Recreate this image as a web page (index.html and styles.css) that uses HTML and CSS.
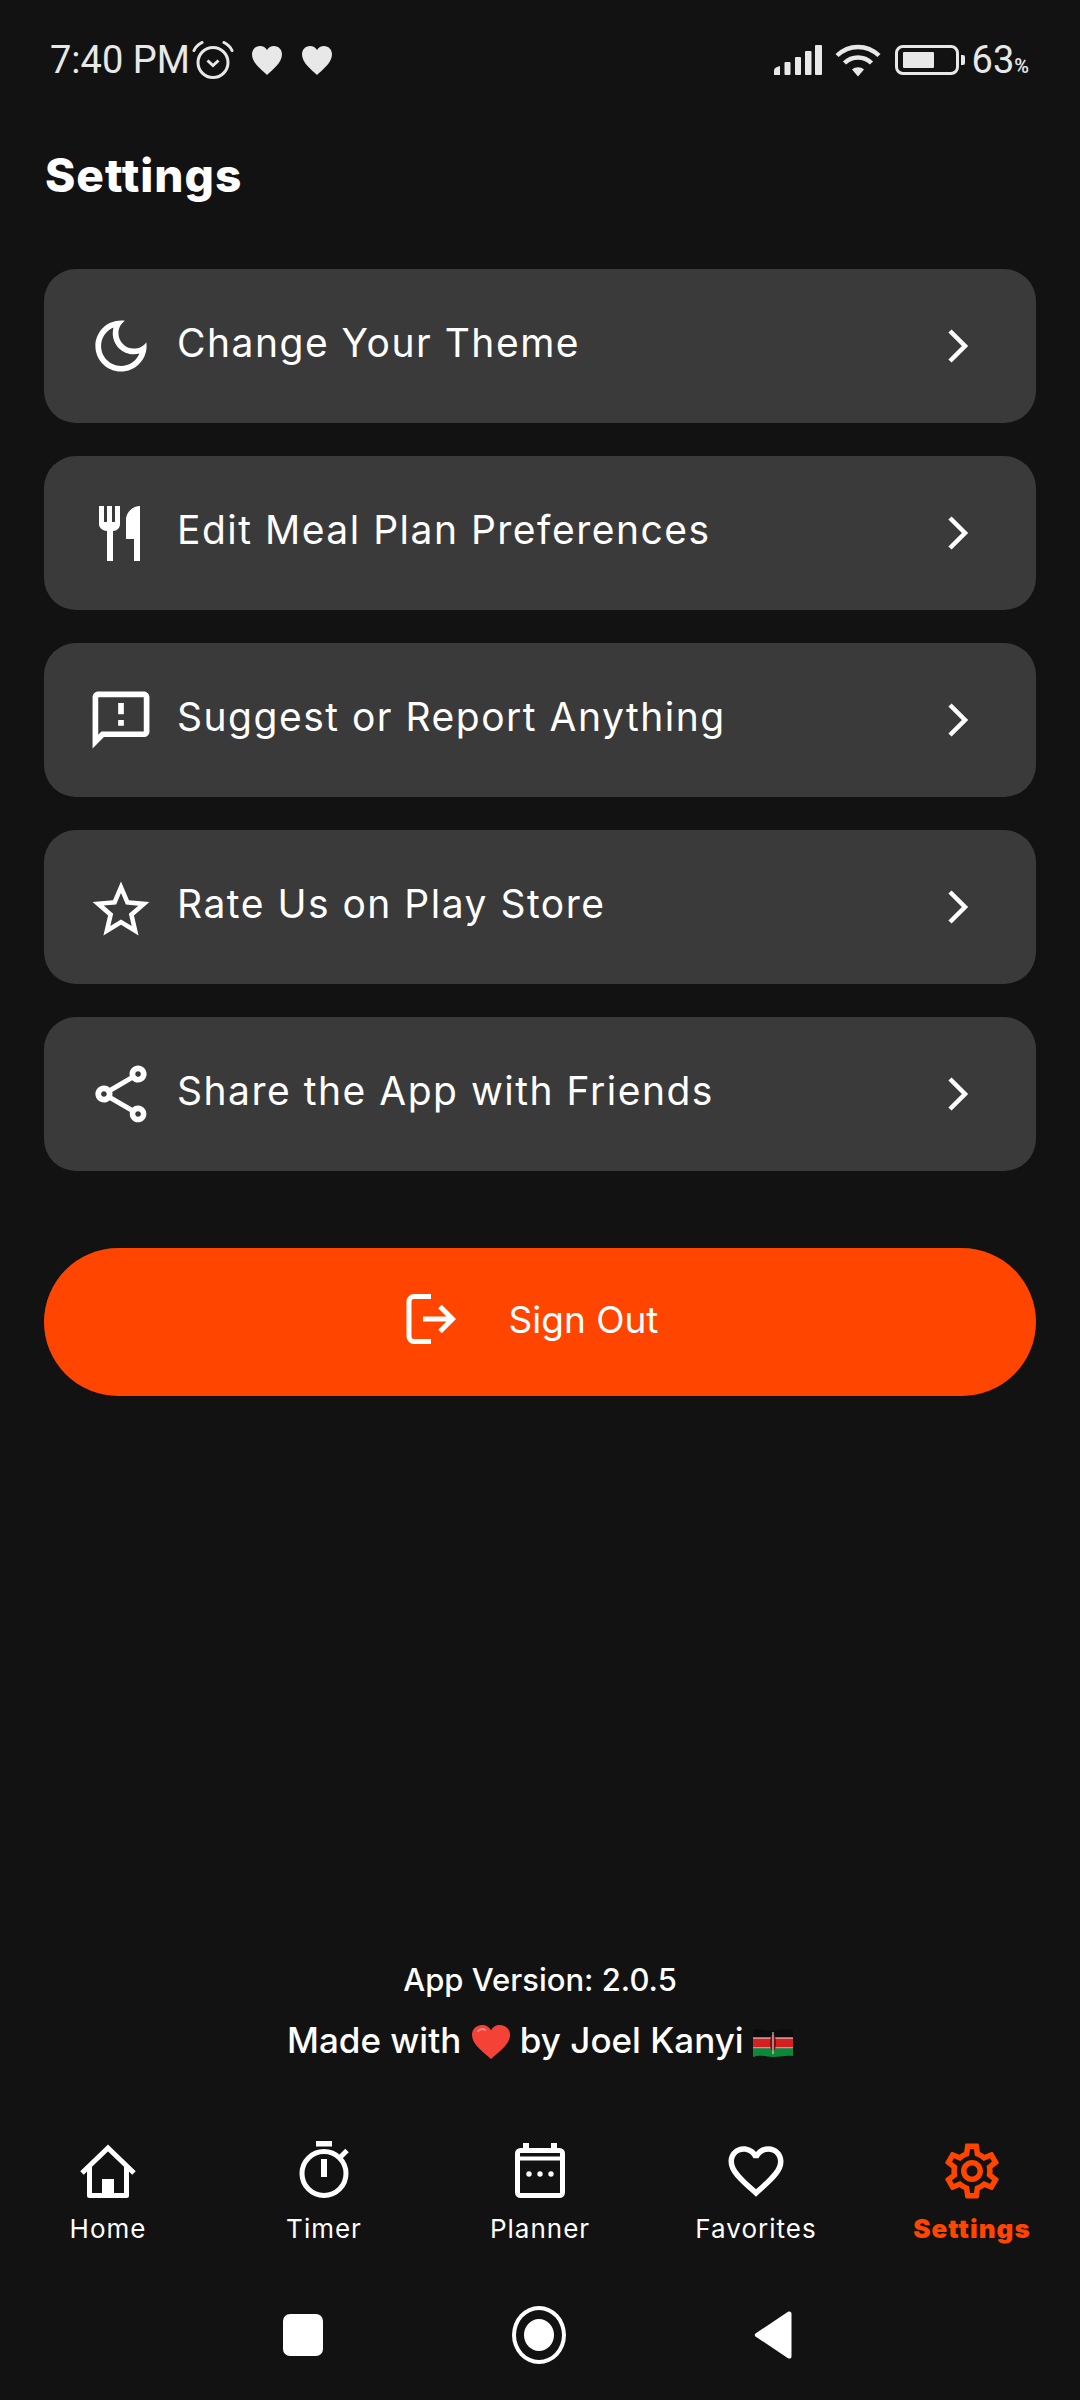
FILE: index.html
```html
<!DOCTYPE html>
<html>
<head>
    <title>Settings</title>
    <link rel="stylesheet" href="styles.css">
</head>
<body>
    <div class="status-bar">
        <span class="time">7:40 PM</span>
        <svg class="alarm-icon" viewBox="0 0 42 38"><circle cx="21" cy="21.5" r="15" fill="none" stroke="#e8e8e8" stroke-width="3"/><path d="M15.5 19.5l5.5 5 5.500-5" fill="none" stroke="#e8e8e8" stroke-width="3"/><path d="M2 9.500C3.500 6 6 3.500 10 1.500M32 1.500c4 2 6.500 4.500 8 8" fill="none" stroke="#e8e8e8" stroke-width="3" stroke-linecap="round"/></svg>
        <svg class="status-heart" viewBox="0 0 32 30"><path d="M16 30C11 25 1 18 1 9.500 1 4.500 4.500 1 9 1c3 0 5.500 1.500 7 4 1.500-2.500 4-4 7-4 4.500 0 8 3.500 8 8.500C31 18 21 25 16 30z" fill="#e8e8e8"/></svg>
        <svg class="status-heart" viewBox="0 0 32 30"><path d="M16 30C11 25 1 18 1 9.500 1 4.500 4.500 1 9 1c3 0 5.500 1.500 7 4 1.500-2.500 4-4 7-4 4.500 0 8 3.500 8 8.500C31 18 21 25 16 30z" fill="#e8e8e8"/></svg>
        <div class="status-right">
            <svg class="signal-icon" viewBox="0 0 48 30" fill="#e8e8e8"><path d="M0 30v-4q0-3 3-4l3-1v9z"/><rect x="10.500" y="17" width="6" height="13" rx="1"/><rect x="21" y="12" width="6" height="18" rx="1"/><rect x="31" y="6" width="6.500" height="24" rx="1"/><rect x="41" y="0" width="7" height="30" rx="1"/></svg>
            <svg class="wifi-icon" viewBox="0 0 46 34" fill="none" stroke="#e8e8e8" stroke-width="4.500"><path d="M2 12.500C14 1 32 1 44 12.500"/><path d="M9.500 20C17 12.500 29 12.500 36.500 20"/><path d="M17 26.500l6 7 6-7c-3.500-3-8.500-3-12 0z" fill="#e8e8e8" stroke="none"/></svg>
            <div class="battery">
                <div class="battery-body"><div class="battery-fill"></div></div>
                <div class="battery-tip"></div>
            </div>
            <span class="battery-text">63<small>%</small></span>
        </div>
    </div>

    <h1 class="page-title">Settings</h1>

    <ul class="settings-list">
        <li class="settings-item">
            <svg class="item-icon" viewBox="0.4 0.4 23.200 23.200"><path d="M9.370 5.510C9.190 6.150 9.100 6.820 9.100 7.500c0 4.080 3.320 7.400 7.400 7.400.68 0 1.350-.09 1.990-.27C17.450 17.190 14.930 19 12 19c-3.860 0-7-3.140-7-7C5 9.070 6.810 6.550 9.370 5.510zM12 3c-4.970 0-9 4.030-9 9s4.030 9 9 9 9-4.030 9-9c0-.46-.04-.92-.1-1.360-.98 1.370-2.580 2.260-4.400 2.260-2.980 0-5.400-2.420-5.400-5.400 0-1.810.89-3.420 2.260-4.400C12.920 3.040 12.460 3 12 3z"/></svg>
            <span class="item-label">Change Your Theme</span>
            <svg class="chevron" viewBox="0 0 24 36"><path d="M4 3l15 15L4 33"/></svg>
        </li>
        <li class="settings-item">
            <svg class="item-icon" viewBox="0 0 66 66"><path d="M11 6h5v16h3V6h5v16h3V6h5v18c0 4-3 7-7 7v30h-6V31c-4 0-8-3-8-7z"/><path d="M52 6v55h-6V39h-8V20c0-8 7-14 14-14z"/></svg>
            <span class="item-label">Edit Meal Plan Preferences</span>
            <svg class="chevron" viewBox="0 0 24 36"><path d="M4 3l15 15L4 33"/></svg>
        </li>
        <li class="settings-item">
            <svg class="item-icon" viewBox="0.4 0.4 23.200 23.200"><path d="M20 2H4c-1.100 0-1.990.9-1.990 2L2 22l4-4h14c1.100 0 2-.9 2-2V4c0-1.100-.9-2-2-2zm0 14H5.170l-.59.59-.58.58V4h16v12zM11 12h2v2h-2zm0-6h2v4h-2z"/></svg>
            <span class="item-label">Suggest or Report Anything</span>
            <svg class="chevron" viewBox="0 0 24 36"><path d="M4 3l15 15L4 33"/></svg>
        </li>
        <li class="settings-item">
            <svg class="item-icon" viewBox="0.4 -0.6 23.200 23.200"><path d="M22 9.240l-7.190-.62L12 2 9.190 8.630 2 9.240l5.460 4.730L5.820 21 12 17.270 18.180 21l-1.630-7.030L22 9.240zM12 15.400l-3.760 2.270 1-4.280-3.320-2.880 4.380-.38L12 6.100l1.710 4.040 4.380.38-3.320 2.880 1 4.280L12 15.400z"/></svg>
            <span class="item-label">Rate Us on Play Store</span>
            <svg class="chevron" viewBox="0 0 24 36"><path d="M4 3l15 15L4 33"/></svg>
        </li>
        <li class="settings-item">
            <svg class="item-icon" viewBox="0.4 0.4 23.200 23.200"><path d="M18 16.080c-.76 0-1.440.3-1.960.77L8.910 12.700c.05-.23.09-.46.09-.7s-.04-.47-.09-.7l7.050-4.110c.54.5 1.250.81 2.040.81 1.660 0 3-1.340 3-3s-1.340-3-3-3-3 1.340-3 3c0 .24.04.47.09.7L8.040 9.810C7.500 9.310 6.790 9 6 9c-1.660 0-3 1.340-3 3s1.340 3 3 3c.79 0 1.500-.31 2.040-.81l7.120 4.160c-.05.21-.08.43-.08.65 0 1.610 1.310 2.920 2.920 2.920s2.920-1.310 2.920-2.920-1.310-2.920-2.920-2.920zM18 4c.55 0 1 .45 1 1s-.45 1-1 1-1-.45-1-1 .45-1 1-1zM6 13c-.55 0-1-.45-1-1s.45-1 1-1 1 .45 1 1-.45 1-1 1zm12 7.020c-.55 0-1-.45-1-1s.45-1 1-1 1 .45 1 1-.45 1-1 1z"/></svg>
            <span class="item-label">Share the App with Friends</span>
            <svg class="chevron" viewBox="0 0 24 36"><path d="M4 3l15 15L4 33"/></svg>
        </li>
    </ul>

    <button class="sign-out" type="button">
        <svg class="sign-out-icon" viewBox="0 0 50 50" fill="none" stroke="#fff" stroke-width="5"><path d="M25 2.500H8a5 5 0 0 0-5 5v35a5 5 0 0 0 5 5h17"/><path d="M17 25h29M34 12.500L46.500 25 34 37.500"/></svg>
        <span>Sign Out</span>
    </button>

    <footer class="app-info">
        <p class="version">App Version: 2.0.5</p>
        <p class="credit">Made with
            <svg class="emoji-heart" viewBox="0 0 38 34"><path d="M19 34C13 28 0 20 0 10 0 4 4.500 0 10 0c4 0 7.500 2 9 5.500C20.500 2 24 0 28 0c5.500 0 10 4 10 10 0 10-13 18-19 24z" fill="#f44336"/><path d="M6 6c2-2 5-2.500 7-1" fill="none" stroke="#f88" stroke-width="2" stroke-linecap="round"/></svg>
            by Joel Kanyi
            <svg class="flag" viewBox="0 0 40 30"><path d="M0 2c8-3 14 2 20 1s13-3 20-1v8H0z" fill="#0c0c0c"/><path d="M0 10h40v10H0z" fill="#d32020"/><path d="M0 10h40M0 20h40" stroke="#eee" stroke-width="1.200"/><path d="M0 20.500h40V28c-7-1-14 1-20 1S8 26 0 29z" fill="#0a8a38"/><ellipse cx="20" cy="15" rx="3" ry="8.500" fill="#7a1010"/><path d="M20 4v22" stroke="#eee" stroke-width="1"/></svg>
        </p>
    </footer>

    <nav class="bottom-nav">
        <a class="nav-item">
            <svg class="nav-icon" viewBox="0 0 66 66"><path d="M7 35L33 10l26 25" fill="none" stroke="#fff" stroke-width="5"/><path d="M14.500 29v28.500h37V29" fill="none" stroke="#fff" stroke-width="5" stroke-linejoin="round"/><rect x="27" y="41" width="12" height="15" fill="#fff"/></svg>
            <span>Home</span>
        </a>
        <a class="nav-item">
            <svg class="nav-icon" viewBox="0 0 66 66"><circle cx="33" cy="35.500" r="22" fill="none" stroke="#fff" stroke-width="5"/><rect x="25" y="3" width="16" height="5.500" fill="#fff"/><rect x="30" y="21" width="6" height="18" fill="#fff"/><path d="M49 19.500l7-7" stroke="#fff" stroke-width="5"/></svg>
            <span>Timer</span>
        </a>
        <a class="nav-item">
            <svg class="nav-icon" viewBox="0 0 66 66"><rect x="10.500" y="12.500" width="45" height="45" rx="3" fill="none" stroke="#fff" stroke-width="5"/><path d="M10 20.500h46" stroke="#fff" stroke-width="4"/><rect x="16" y="5" width="6" height="8" fill="#fff"/><rect x="44" y="5" width="6" height="8" fill="#fff"/><circle cx="22" cy="36" r="2.700" fill="#fff"/><circle cx="33" cy="36" r="2.700" fill="#fff"/><circle cx="44" cy="36" r="2.700" fill="#fff"/></svg>
            <span>Planner</span>
        </a>
        <a class="nav-item">
            <svg class="nav-icon" viewBox="0 0 24 24"><path fill="#fff" d="M16.500 3c-1.740 0-3.410.81-4.500 2.090C10.910 3.810 9.240 3 7.500 3 4.420 3 2 5.420 2 8.500c0 3.780 3.400 6.860 8.550 11.540L12 21.350l1.450-1.320C18.600 15.360 22 12.280 22 8.500 22 5.420 19.580 3 16.500 3zm-4.400 15.550l-.1.1-.1-.1C7.140 14.240 4 11.390 4 8.500 4 6.500 5.500 5 7.500 5c1.540 0 3.040.99 3.570 2.360h1.870C13.460 5.990 14.960 5 16.500 5c2 0 3.500 1.500 3.500 3.500 0 2.890-3.140 5.740-7.900 10.050z"/></svg>
            <span>Favorites</span>
        </a>
        <a class="nav-item active">
            <svg class="nav-icon" viewBox="0 0 24 24"><path fill="#ff4500" d="M19.430 12.980c.04-.32.07-.64.07-.98 0-.34-.03-.66-.07-.98l2.110-1.650c.19-.15.24-.42.12-.64l-2-3.460c-.09-.16-.26-.25-.44-.25-.06 0-.12.01-.17.03l-2.490 1c-.52-.4-1.080-.73-1.690-.98l-.38-2.650C14.460 2.180 14.250 2 14 2h-4c-.25 0-.46.18-.49.42l-.38 2.650c-.61.25-1.170.59-1.690.98l-2.490-1c-.06-.02-.12-.03-.18-.03-.17 0-.34.09-.43.25l-2 3.460c-.13.22-.07.49.12.64l2.110 1.650c-.04.32-.07.65-.07.98 0 .33.03.66.07.98l-2.110 1.650c-.19.15-.24.42-.12.64l2 3.460c.09.16.26.25.44.25.06 0 .12-.01.17-.03l2.490-1c.52.4 1.080.73 1.690.98l.38 2.650c.03.24.24.42.49.42h4c.25 0 .46-.18.49-.42l.38-2.650c.61-.25 1.170-.59 1.690-.98l2.490 1c.06.02.12.03.18.03.17 0 .34-.09.43-.25l2-3.460c.12-.22.07-.49-.12-.64l-2.110-1.650zm-1.980-1.710c.04.31.05.52.05.73 0 .21-.02.43-.05.73l-.14 1.130.89.7 1.080.84-.7 1.210-1.270-.51-1.040-.42-.9.68c-.43.32-.84.56-1.250.73l-1.060.43-.16 1.130-.2 1.350h-1.400l-.19-1.350-.16-1.130-1.060-.43c-.43-.18-.83-.41-1.230-.71l-.91-.7-1.060.43-1.270.51-.7-1.210 1.080-.84.89-.7-.14-1.130c-.03-.31-.05-.54-.05-.74s.02-.43.05-.73l.14-1.130-.89-.7-1.080-.84.7-1.210 1.270.51 1.040.42.9-.68c.43-.32.84-.56 1.250-.73l1.060-.43.16-1.130.2-1.350h1.390l.19 1.350.16 1.130 1.060.43c.43.18.83.41 1.230.71l.91.7 1.060-.43 1.270-.51.7 1.210-1.070.85-.89.7.14 1.130zM12 8c-2.210 0-4 1.790-4 4s1.790 4 4 4 4-1.790 4-4-1.790-4-4-4zm0 6c-1.100 0-2-.9-2-2s.9-2 2-2 2 .9 2 2-.9 2-2 2z"/></svg>
            <span>Settings</span>
        </a>
    </nav>

    <div class="system-nav">
        <div class="sys-square"></div>
        <div class="sys-home"><div class="sys-home-dot"></div></div>
        <svg class="sys-back" viewBox="0 0 38 48"><path d="M1.500 22.500L34 .8c2-1 3.500 0 3.500 2v42.400c0 2-1.500 3-3.500 2L1.500 25.500c-1-.8-1-2.200 0-3z" fill="#fff"/></svg>
    </div>
</body>
</html>
```
FILE: styles.css
```css
* {
    box-sizing: border-box;
}

body {
    margin: 0;
    width: 1080px;
    height: 2400px;
    display: flex;
    flex-direction: column;
    background-color: #121212;
    color: #fff;
    font-family: Inter, "Noto Sans", sans-serif;
    overflow: hidden;
}

/* status bar */
.status-bar {
    height: 120px;
    padding: 0 51px 0 50px;
    display: flex;
    align-items: center;
    color: #e8e8e8;
    font-family: Roboto, sans-serif;
}

.time {
    font-size: 38px;
    width: 142px;
    white-space: nowrap;
}

.alarm-icon {
    width: 42px;
    height: 38px;
    margin-right: 17px;
}

.status-heart {
    width: 32px;
    height: 30px;
    margin-right: 18px;
}

.status-right {
    margin-left: auto;
    display: flex;
    align-items: center;
}

.signal-icon {
    width: 48px;
    height: 30px;
    margin-right: 13px;
}

.wifi-icon {
    width: 46px;
    height: 34px;
    margin-right: 14px;
}

.battery {
    display: flex;
    align-items: center;
    margin-right: 7px;
}

.battery-body {
    width: 64px;
    height: 30px;
    padding: 4px 5px;
    border: 3px solid #e8e8e8;
    border-radius: 8px;
}

.battery-fill {
    width: 31px;
    height: 100%;
    background-color: #e8e8e8;
    border-radius: 1px;
}

.battery-tip {
    width: 4px;
    height: 10px;
    margin-left: 2px;
    background-color: #e8e8e8;
    border-radius: 0 2px 2px 0;
}

.battery-text {
    font-size: 38px;
    white-space: nowrap;
}

.battery-text small {
    font-size: 20px;
    font-weight: 500;
}

/* title */
.page-title {
    margin: 0 0 39px;
    padding-left: 45px;
    height: 110px;
    line-height: 110px;
    font-size: 46px;
    font-weight: 800;
    letter-spacing: 1px;
}

/* settings rows */
.settings-list {
    list-style: none;
    margin: 0 44px;
    padding: 0;
    display: flex;
    flex-direction: column;
    gap: 33px;
}

.settings-item {
    height: 154px;
    padding: 0 0 0 44px;
    display: flex;
    align-items: center;
    background-color: #3a3a3a;
    border-radius: 32px;
}

.item-icon {
    width: 66px;
    height: 66px;
    fill: #fff;
    flex-shrink: 0;
}

.item-label {
    margin-left: 23px;
    padding-bottom: 7px;
    font-size: 39px;
    letter-spacing: 1.500px;
    flex: 1;
}

.chevron {
    width: 24px;
    height: 36px;
    margin-right: 66px;
    fill: none;
    stroke: #fff;
    stroke-width: 4.500;
}

/* sign out */
.sign-out {
    margin: 77px 44px 0;
    height: 148px;
    padding: 0 16px 6px 0;
    display: flex;
    align-items: center;
    justify-content: center;
    border: 0;
    border-radius: 74px;
    background-color: #ff4500;
    color: #fff;
    font-family: inherit;
    font-size: 37px;
}

.sign-out-icon {
    width: 50px;
    height: 50px;
    margin-right: 53px;
}

/* footer */
.app-info {
    margin-top: auto;
    margin-bottom: 68px;
    text-align: center;
}

.app-info p {
    margin: 0;
    height: 60px;
    line-height: 60px;
}

.version {
    font-size: 31px;
    font-weight: 500;
}

.credit {
    font-size: 35px;
    font-weight: 500;
}

.emoji-heart {
    width: 38px;
    height: 34px;
    vertical-align: -6px;
    margin: 0 1px;
}

.flag {
    width: 40px;
    height: 30px;
    vertical-align: -5px;
}

/* bottom nav */
.bottom-nav {
    display: grid;
    grid-template-columns: repeat(5, 1fr);
    height: 138px;
}

.nav-item {
    display: flex;
    flex-direction: column;
    align-items: center;
    font-size: 26px;
    letter-spacing: 1px;
    line-height: 50px;
}

.nav-icon {
    width: 66px;
    height: 66px;
}

.nav-item.active {
    color: #ff4500;
    font-weight: 900;
}

/* android buttons */
.system-nav {
    height: 124px;
    padding: 0 4px 6px 0;
    display: flex;
    align-items: center;
    justify-content: center;
}

.sys-square {
    width: 40px;
    height: 42px;
    margin-right: 189px;
    background-color: #fff;
    border-radius: 7px;
    margin-left: -2px;
}

.sys-home {
    width: 54px;
    height: 58px;
    display: flex;
    align-items: center;
    justify-content: center;
    border: 4px solid #fff;
    border-radius: 50%;
}

.sys-home-dot {
    width: 30px;
    height: 32px;
    background-color: #fff;
    border-radius: 50%;
}

.sys-back {
    width: 38px;
    height: 48px;
    margin-left: 188px;
}
```
